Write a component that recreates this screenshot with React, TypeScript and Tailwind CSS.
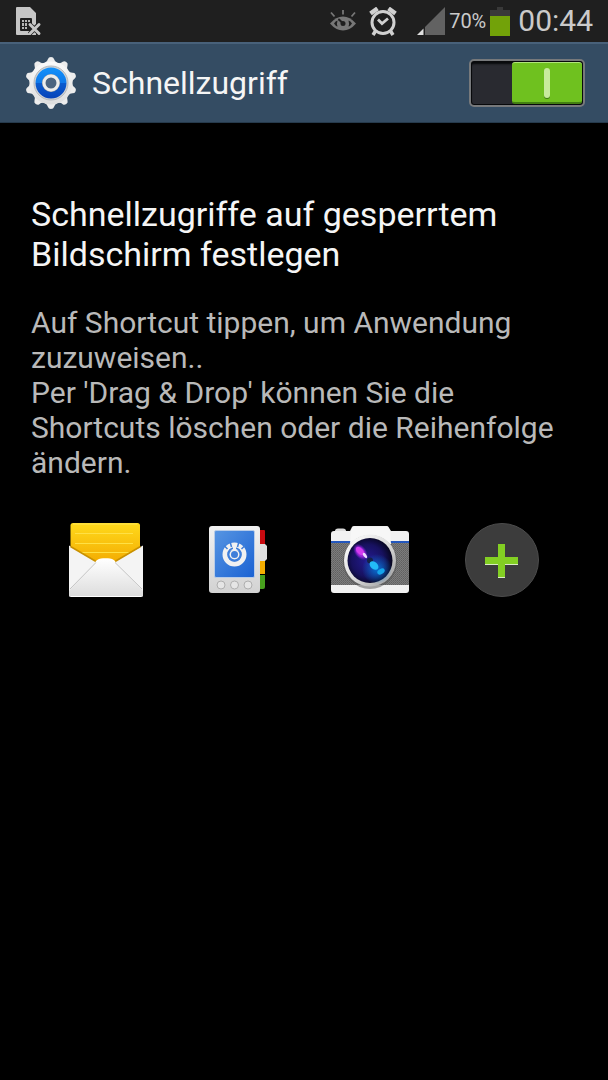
import { useState } from "react";

function SimIcon() {
  return (
    <svg width="26" height="29" viewBox="0 0 26 29" aria-hidden="true">
      <path d="M1 0H14L20 6V17L17 20L20 23V28H1Q0 28 0 27V1Q0 0 1 0Z" fill="#c6c6c6" />
      <rect x="4" y="11" width="12" height="13" rx="1" fill="#1f1f1f" />
      <path d="M6 13h2v2H6zM9 13h2v2H9zM12 13h2v2h-2zM6 16h2v3H6zM9 16h2v3H9zM6 20h2v2H6zM9 20h2v2H9z" fill="#b5b5b5" />
      <path d="M13.500 17L23.500 27M23.500 17L13.500 27" stroke="#1f1f1f" strokeWidth="4.500" />
      <path d="M14 17.500L23 26.500M23 17.500L14 26.500" stroke="#c6c6c6" strokeWidth="3" strokeLinecap="round" />
    </svg>
  );
}

function EyeIcon() {
  return (
    <svg width="28" height="22" viewBox="0 0 28 22" aria-hidden="true">
      <path d="M1 13.500Q7 6.500 14 6.500T27 13.500Q21 20.500 14 20.500T1 13.500Z" fill="#777" />
      <path d="M5 13.500Q6.500 11 8.500 10.500Q7.500 13.500 8.500 16.500Q6.500 16 5 13.500ZM23 13.500Q21.500 11 19.500 10.500Q20.500 13.500 19.500 16.500Q21.500 16 23 13.500Z" fill="#1f1f1f" />
      <circle cx="14" cy="13.500" r="2.500" fill="#1f1f1f" />
      <path d="M10 9.500L14 13.500" stroke="#1f1f1f" strokeWidth="2" strokeLinecap="round" />
      <path d="M14 0V4.500M2 2.500L5.500 6.500M26 2.500L22.500 6.500" stroke="#777" strokeWidth="1.800" />
    </svg>
  );
}

function AlarmIcon() {
  return (
    <svg width="28" height="29" viewBox="0 0 28 29" fill="none" stroke="#d0d0d0" aria-hidden="true">
      <circle cx="14" cy="15.500" r="11" strokeWidth="3" />
      <path d="M9 12.500L13 16.500L19 11.500" strokeWidth="2.800" />
      <path d="M1.500 6.500L8.500 1.500M26.500 6.500L19.500 1.500" strokeWidth="4.500" />
      <path d="M6.500 24L4 28M21.500 24L24 28" strokeWidth="3.500" />
    </svg>
  );
}

function SignalIcon() {
  return (
    <svg width="28" height="28" viewBox="0 0 28 28" aria-hidden="true">
      <path d="M8 20L28 0V28H8Z" fill="#626262" />
      <path d="M0 28L6.500 21.500V28Z" fill="#dedede" />
    </svg>
  );
}

function BatteryIcon() {
  return (
    <svg width="20" height="29" viewBox="0 0 20 29" aria-hidden="true">
      <path d="M7 0H13V3H20V10H0V3H7Z" fill="#393939" />
      <rect y="9" width="20" height="20" fill="#72a209" />
    </svg>
  );
}

const TEETH = [0, 36, 72, 108, 144, 180, 216, 252, 288, 324];

function GearIcon() {
  return (
    <svg width="52" height="52" viewBox="0 0 52 52" aria-hidden="true">
      <defs>
        <linearGradient id="gear-body" x1="0" y1="0" x2="0" y2="1">
          <stop offset="0" stopColor="#fafafa" />
          <stop offset="1" stopColor="#dedede" />
        </linearGradient>
        <linearGradient id="gear-blue" x1="0" y1="0" x2="0" y2="1">
          <stop offset="0" stopColor="#1492fb" />
          <stop offset=".5" stopColor="#0f79ea" />
          <stop offset=".5" stopColor="#0a5cd0" />
          <stop offset="1" stopColor="#0843b8" />
        </linearGradient>
      </defs>
      {TEETH.map((angle) => (
        <path key={angle} d="M19.500 6Q22.500 4.500 23 2Q23.500 0 26 0T29 2Q29.500 4.500 32.500 6L30 9H22Z" fill="#ededed" transform={`rotate(${angle} 26 26)`} />
      ))}
      <circle cx="26" cy="26" r="21.500" fill="url(#gear-body)" />
      <circle cx="26" cy="26" r="17" fill="#d5d5d5" stroke="#b4b8bd" strokeWidth="1" />
      <circle cx="26" cy="26" r="15.500" fill="url(#gear-blue)" />
      <circle cx="26" cy="26" r="7.500" fill="#4c6480" stroke="#a6a6a6" strokeWidth="3" />
      <circle cx="26" cy="26" r="7" fill="none" stroke="#ececec" strokeWidth="3" />
    </svg>
  );
}

function MailIcon() {
  return (
    <svg width="74" height="74" viewBox="0 0 74 74" aria-hidden="true">
      <defs>
        <linearGradient id="mail-paper" x1="0" y1="0" x2="0" y2="1">
          <stop offset="0" stopColor="#ffda1c" />
          <stop offset="1" stopColor="#f3a900" />
        </linearGradient>
        <linearGradient id="mail-front" x1="0" y1="0" x2="0" y2="1">
          <stop offset="0" stopColor="#ffffff" />
          <stop offset="1" stopColor="#dcdcdc" />
        </linearGradient>
      </defs>
      <rect x="1.500" width="69.500" height="42" rx="2.500" fill="url(#mail-paper)" />
      <path d="M4 1H68" stroke="#ffe657" />
      <path d="M6 10.500H64M6 20.500H64M10 29.500H62" stroke="#ffe044" />
      <path d="M0 22.500L27 38.500H46L74 22.500V72Q74 74 72 74H2Q0 74 0 72Z" fill="#f4f4f4" />
      <path d="M1.500 23.500L27 38.500M46 38.500L71.500 23.500" stroke="#c99100" strokeWidth="1.500" />
      <path d="M0 68L27 39.500Q30 36 34 36H39Q43 36 46 39.500L74 68V72Q74 74 72 74H2Q0 74 0 72Z" fill="url(#mail-front)" />
      <path d="M1 66L27 39.500M46 39.500L73 66" stroke="#c5c5c5" fill="none" />
      <path d="M27 39Q30 36 34 36H39Q43 36 46 39" stroke="#fff" strokeWidth="1.500" fill="none" />
      <path d="M2 73.500H72" stroke="#fff" />
    </svg>
  );
}

function ContactsIcon() {
  return (
    <svg width="58" height="68" viewBox="0 0 58 68" aria-hidden="true">
      <defs>
        <linearGradient id="book-body" x1="0" y1="0" x2="0" y2="1">
          <stop offset="0" stopColor="#f2f2f2" />
          <stop offset="1" stopColor="#d2d2d2" />
        </linearGradient>
        <linearGradient id="book-screen" x1="0" y1="0" x2="1" y2="1">
          <stop offset="0" stopColor="#5795e2" />
          <stop offset="1" stopColor="#1a62d3" />
        </linearGradient>
      </defs>
      <path d="M50 4H55Q56 4 56 5V19H50Z" fill="#c80a10" />
      <path d="M50 34H56V48H50Z" fill="#f3ad00" />
      <path d="M50 49H56V61Q56 63 54 63H50Z" fill="#47a01d" />
      <path d="M49 18H56L58 20V33L56 35H49Z" fill="#dedede" />
      <rect width="51" height="67" rx="3" fill="url(#book-body)" />
      <rect x="5.500" y="4.500" width="40" height="47" rx="1.500" fill="url(#book-screen)" stroke="#b7cce8" />
      <circle cx="25.500" cy="28.500" r="9.500" fill="none" stroke="#f1f1f1" strokeWidth="5" />
      <path d="M21 15.500L22.500 21M30 15.500L28.500 21M15 19.500L18.500 23M36 19.500L32.500 23" stroke="#3f7fdb" strokeWidth="1.500" />
      <path d="M25.500 18.500Q27 22 30 24.500H21Q24 22 25.500 18.500Z" fill="#f1f1f1" />
      <circle cx="25.500" cy="28.500" r="5" fill="#f1f1f1" />
      <circle cx="25.500" cy="28.500" r="6.500" fill="none" stroke="#3f7fdb" strokeWidth="1.500" />
      <path d="M24 18H27V25H24Z" fill="#f1f1f1" />
      <circle cx="25.500" cy="28.500" r="3.500" fill="#3f7ed9" />
      <g fill="#e5e5e5" stroke="#afafaf">
        <circle cx="12" cy="59" r="4" />
        <circle cx="25.500" cy="59" r="4" />
        <circle cx="39" cy="59" r="4" />
      </g>
    </svg>
  );
}

function CameraIcon() {
  return (
    <svg width="78" height="68" viewBox="0 0 78 68" aria-hidden="true">
      <defs>
        <pattern id="camera-grip" width="2" height="2" patternUnits="userSpaceOnUse">
          <rect width="2" height="2" fill="#7c7c7c" />
          <rect width="1" height="1" fill="#606060" />
          <rect x="1" y="1" width="1" height="1" fill="#686868" />
        </pattern>
        <linearGradient id="camera-ring" x1="0" y1="0" x2="1" y2="1">
          <stop offset="0" stopColor="#ffffff" />
          <stop offset=".5" stopColor="#dedede" />
          <stop offset="1" stopColor="#969696" />
        </linearGradient>
        <radialGradient id="camera-lens" cx=".45" cy=".5" r=".55">
          <stop offset="0" stopColor="#241b91" />
          <stop offset=".65" stopColor="#17115f" />
          <stop offset="1" stopColor="#06051c" />
        </radialGradient>
        <radialGradient id="camera-glow" cx=".5" cy=".5" r=".5">
          <stop offset="0" stopColor="#0870d1" />
          <stop offset="1" stopColor="#0870d1" stopOpacity="0" />
        </radialGradient>
        <radialGradient id="camera-flare" cx=".5" cy=".5" r=".5">
          <stop offset="0" stopColor="#c93af0" />
          <stop offset=".6" stopColor="#8a22cf" />
          <stop offset="1" stopColor="#5a1bb0" stopOpacity="0" />
        </radialGradient>
      </defs>
      <path d="M4 5Q4 2.500 7 2.500H12Q15 2.500 15 5V8H4Z" fill="#dcdcdc" />
      <path d="M0 8Q0 5 3 5H19L21 1Q21.500 0 23 0H56Q57 0 57.500 1L60 5H75Q78 5 78 8V64Q78 67 75 67H3Q0 67 0 64Z" fill="#f1f1f1" />
      <rect y="17" width="78" height="42" fill="url(#camera-grip)" />
      <rect y="15" width="78" height="2" fill="#2357bd" />
      <path d="M20 5L19 18H60L59 5L57 1H22Z" fill="#f7f7f7" />
      <circle cx="39" cy="36" r="27" fill="#4f4f4f" opacity=".5" />
      <circle cx="39" cy="34.500" r="26" fill="url(#camera-ring)" />
      <circle cx="39" cy="34.500" r="22.500" fill="url(#camera-lens)" />
      <circle cx="46" cy="43" r="15" fill="url(#camera-glow)" />
      <ellipse cx="29.500" cy="26" rx="6" ry="9.500" fill="url(#camera-flare)" transform="rotate(-38 29.500 26)" />
      <ellipse cx="29" cy="25" rx="3" ry="5" fill="#d43cf0" transform="rotate(-45 29 25)" />
      <ellipse cx="34" cy="29.500" rx="1.500" ry="3" fill="#eed9ff" transform="rotate(-35 34 29.500)" />
      <circle cx="39" cy="34.500" r="3" fill="#152247" />
      <ellipse cx="43" cy="39.500" rx="3.500" ry="5" fill="#23bbf7" transform="rotate(-50 43 39.500)" />
      <ellipse cx="50" cy="45.500" rx="4" ry="2.500" fill="#15a4eb" transform="rotate(-30 50 45.500)" />
    </svg>
  );
}

function AddIcon() {
  return (
    <svg width="74" height="74" viewBox="0 0 74 74" aria-hidden="true">
      <circle cx="37" cy="37" r="36.500" fill="#3c3c3c" stroke="#4c4c4c" />
      <path d="M33 22H40V35H53V42H40V55H33V42H20V35H33Z" fill="#d9ecc4" />
      <path d="M33 21H40V34H53V41H40V54H33V41H20V34H33Z" fill="#83cf23" />
    </svg>
  );
}

const SHORTCUTS = [
  { label: "E-Mail", Icon: MailIcon },
  { label: "Kontakte", Icon: ContactsIcon },
  { label: "Kamera", Icon: CameraIcon },
  { label: "Hinzufügen", Icon: AddIcon },
];

export default function App() {
  const [enabled, setEnabled] = useState(true);

  return (
    <div className="min-h-screen bg-black font-[Roboto,sans-serif] text-[#f5f5f5]">
      <div className="flex h-[42px] items-center justify-between bg-[#1f1f1f] pr-[15px] pl-4 text-[#cacaca]">
        <SimIcon />
        <div className="flex items-center">
          <EyeIcon />
          <span className="ml-3"><AlarmIcon /></span>
          <span className="ml-5"><SignalIcon /></span>
          <span className="ml-1 text-xl">70%</span>
          <span className="ml-1"><BatteryIcon /></span>
          <span className="ml-2 text-[30px] leading-8">00:44</span>
        </div>
      </div>

      <header className="flex h-[81px] items-center border-t-2 border-b border-t-[#48617a] border-b-[#263a4c] bg-[#344c63] pr-[23px] pl-[25px]">
        <GearIcon />
        <h1 className="ml-[15px] flex-1 text-[32px] leading-10">Schnellzugriff</h1>
        <button
          type="button"
          role="switch"
          aria-checked={enabled}
          aria-label="Schnellzugriff"
          onClick={() => setEnabled(!enabled)}
          className={`flex h-12 w-[116px] rounded-[5px] border-2 border-[#77797b] bg-[#292a30] p-px shadow-[inset_0_0_0_1px_#08090b,inset_0_3px_2px_#08090b] ${enabled ? "justify-end" : "justify-start"}`}
        >
          <span className="flex h-[42px] w-[70px] items-center justify-center rounded-[3px] border-t border-b-2 border-t-[#b0e57b] border-b-[#438011] bg-[#6fc11f]">
            <span className="h-[30px] w-[6px] rounded-full bg-[#c8eb9d] shadow-[0_1px_0_#3f7911]" />
          </span>
        </button>
      </header>

      <main>
        <section className="px-[31px] pt-[71px]">
          <h2 className="text-[34px] leading-10">Schnellzugriffe auf gesperrtem Bildschirm festlegen</h2>
          <p className="mt-[31px] text-[30px] leading-[35px] text-[#b9b9b9]">
            Auf Shortcut tippen, um Anwendung zuzuweisen..
            <br />
            Per 'Drag &amp; Drop' können Sie die Shortcuts löschen oder die Reihenfolge ändern.
          </p>
        </section>
        <div className="mt-[43px] grid grid-cols-4 px-10">
          {SHORTCUTS.map(({ label, Icon }) => (
            <button key={label} type="button" aria-label={label} className="flex items-center justify-center">
              <Icon />
            </button>
          ))}
        </div>
      </main>
    </div>
  );
}
